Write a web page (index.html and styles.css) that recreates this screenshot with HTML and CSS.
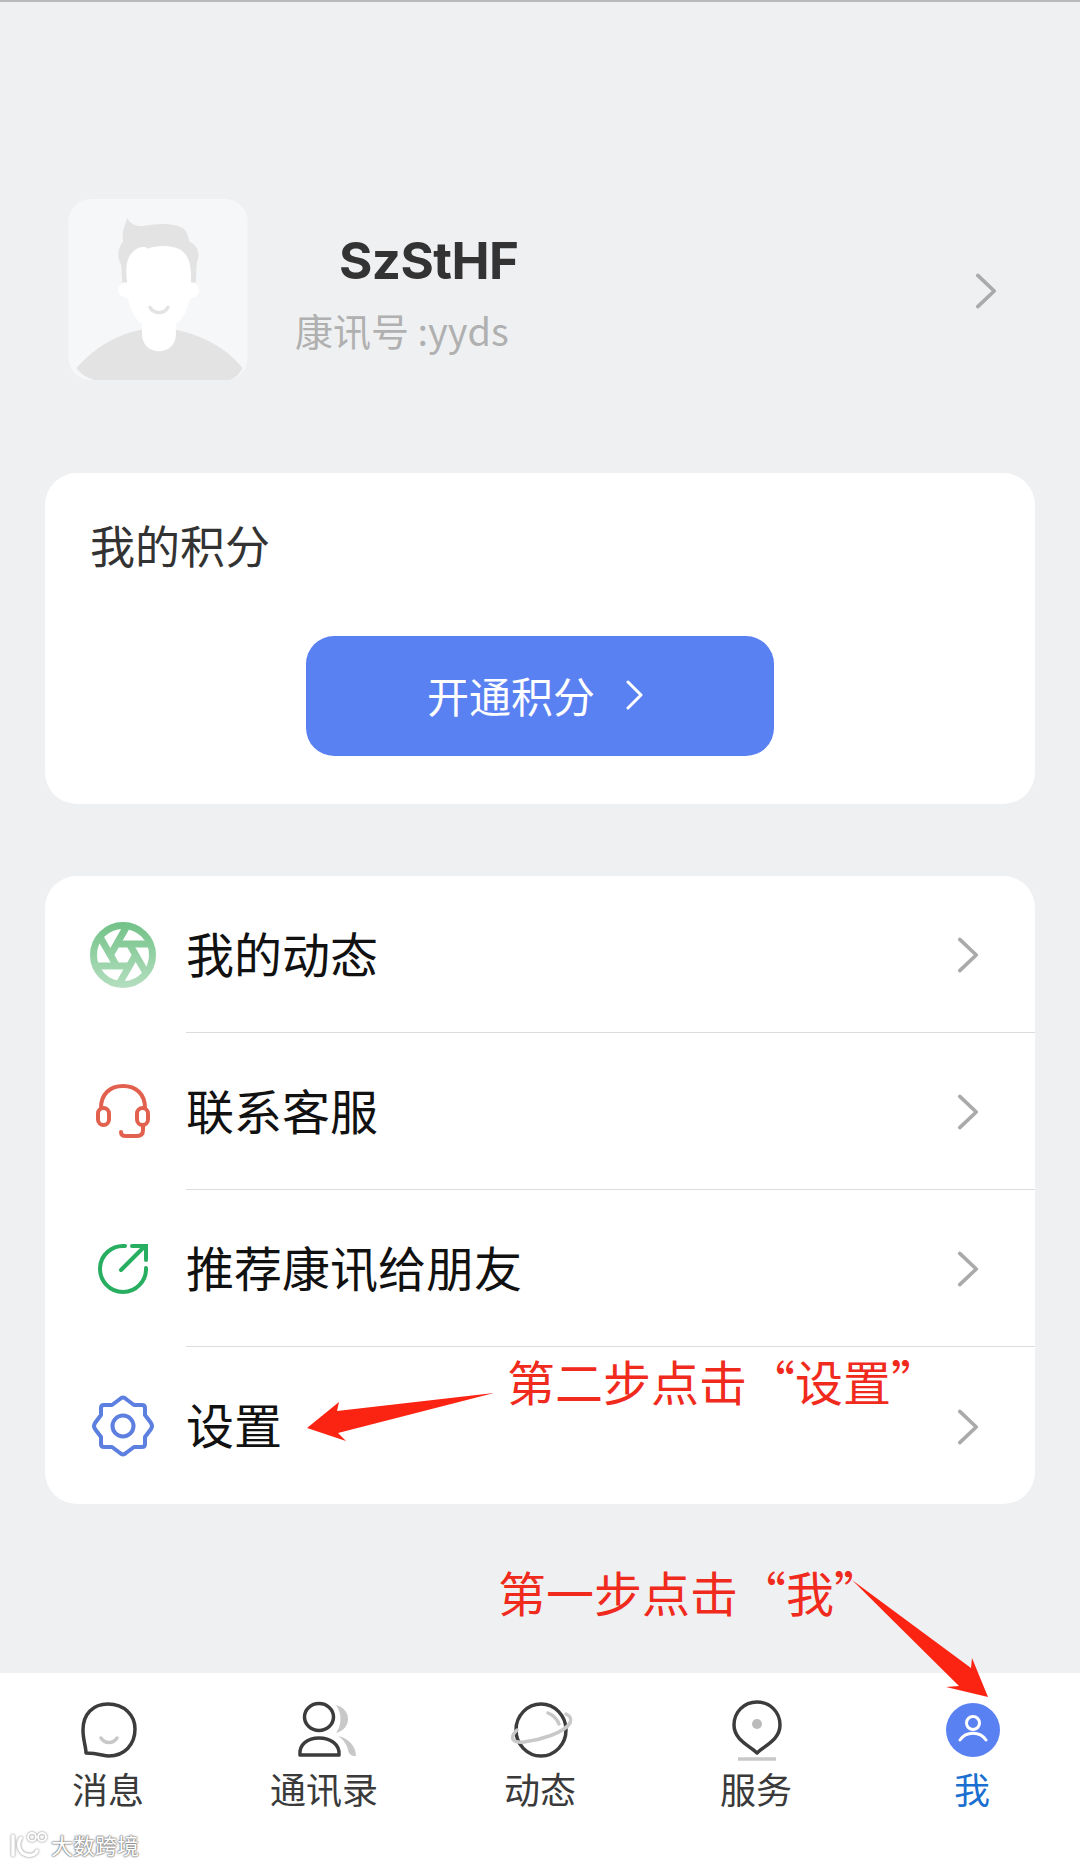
FILE: index.html
```html
<!DOCTYPE html>
<html lang="zh-CN">
<head>
  <meta charset="UTF-8" />
  <meta name="viewport" content="width=device-width, initial-scale=1.0" />
  <title>我</title>
  <link rel="stylesheet" href="styles.css">
</head>
<body>
  <div class="page">
    <main class="content">
      <section class="profile">
        <svg class="avatar" viewBox="0 0 180 182">
          <rect width="180" height="182" rx="22" fill="#f6f7f8"/>
          <path d="M8 170 C30 145 60 130 90 130 C120 130 155 145 175 170 C172 176 168 180 162 182 H26 C18 180 12 176 8 170 Z" fill="#e3e3e3"/>
          <path d="M59 19 C62 25 68 28 76 27 C90 24 108 24 116 30 C121 36 120 40 122 43 C130 47 133 55 129 64 L128 84 H54 L53 66 C48 58 50 48 55 43 C53 33 57 27 59 19 Z" fill="#e3e3e3"/>
          <path d="M59 84 C57 70 58 58 66 52 C72 47 78 48 80 50 C88 46 106 46 114 52 C122 58 124 70 123 84 C130 84 134 92 130 96 C128 99 124 100 122 100 C120 112 114 122 108 126 V136 C108 147 100 153 91 153 C82 153 74 147 74 136 V126 C68 122 62 112 60 100 C57 100 53 98 51 95 C48 90 52 84 59 84 Z" fill="#fff"/>
          <path d="M82 109 C86 116 96 116 100 109" fill="none" stroke="#e3e3e3" stroke-width="3.5" stroke-linecap="round"/>
        </svg>
        <div class="profile-text">
          <div class="name">SzStHF</div>
          <div class="account">康讯号 :yyds</div>
        </div>
        <svg class="chev chev-profile" viewBox="0 0 24 40"><path d="M3 3 L21 20 L3 37"/></svg>
      </section>

      <section class="card points">
        <h2 class="points-title">我的积分</h2>
        <button class="points-btn">
          <span class="btn-label">开通积分</span>
          <svg class="btn-chev" viewBox="0 0 18 30"><path d="M2 2 L15 15 L2 28"/></svg>
        </button>
      </section>

      <section class="card menu">
        <div class="row">
          <svg class="row-icon" viewBox="0 0 70 70">
            <defs>
              <linearGradient id="fade" x1="0" y1="0" x2="0" y2="1">
                <stop offset="0" stop-color="#fff" stop-opacity="0"/>
                <stop offset="1" stop-color="#fff" stop-opacity=".5"/>
              </linearGradient>
            </defs>
            <g fill="none" stroke="#6fc185" stroke-width="7">
              <circle cx="35" cy="35" r="29.5"/>
              <path d="M27 24 H62"/>
              <path d="M27 24 H62" transform="rotate(60 35 35)"/>
              <path d="M27 24 H62" transform="rotate(120 35 35)"/>
              <path d="M27 24 H62" transform="rotate(180 35 35)"/>
              <path d="M27 24 H62" transform="rotate(240 35 35)"/>
              <path d="M27 24 H62" transform="rotate(300 35 35)"/>
            </g>
            <rect width="70" height="70" fill="url(#fade)"/>
          </svg>
          <div class="row-body">
            <span class="row-label">我的动态</span>
            <svg class="chev" viewBox="0 0 24 40"><path d="M3 3 L21 20 L3 37"/></svg>
          </div>
        </div>
        <div class="row">
          <svg class="row-icon" viewBox="0 0 70 70" fill="none" stroke="#e2614e" stroke-width="4" stroke-linecap="round">
            <path d="M13 31 C13 17 22 9 35 9 C48 9 57 17 57 31"/>
            <rect x="10" y="31" width="11" height="17" rx="5.5"/>
            <rect x="49" y="31" width="11" height="17" rx="5.5"/>
            <path d="M55 48 V53 Q55 59 49 59 H38 Q33 59 33 55"/>
          </svg>
          <div class="row-body">
            <span class="row-label">联系客服</span>
            <svg class="chev" viewBox="0 0 24 40"><path d="M3 3 L21 20 L3 37"/></svg>
          </div>
        </div>
        <div class="row">
          <svg class="row-icon" viewBox="0 0 70 70" fill="none" stroke="#27ae60" stroke-width="4" stroke-linecap="round">
            <path d="M37 12 A23 23 0 1 0 58 34"/>
            <path d="M33 36 L57 12"/>
            <path d="M44 12 H58 V26"/>
          </svg>
          <div class="row-body">
            <span class="row-label">推荐康讯给朋友</span>
            <svg class="chev" viewBox="0 0 24 40"><path d="M3 3 L21 20 L3 37"/></svg>
          </div>
        </div>
        <div class="row">
          <svg class="row-icon" viewBox="0 0 70 70" fill="none" stroke="#5d7fe0" stroke-width="4" stroke-linejoin="round">
            <path d="M32 8 Q35 5 38 8 L46 14 H54 Q57 14 57 17 V24 L63 32 Q65 35 63 38 L57 46 V53 Q57 56 54 56 H46 L38 62 Q35 65 32 62 L24 56 H16 Q13 56 13 53 V46 L7 38 Q5 35 7 32 L13 24 V17 Q13 14 16 14 H24 Z"/>
            <circle cx="35" cy="35" r="10.5"/>
          </svg>
          <div class="row-body">
            <span class="row-label">设置</span>
            <svg class="chev" viewBox="0 0 24 40"><path d="M3 3 L21 20 L3 37"/></svg>
          </div>
        </div>
      </section>
    </main>

    <nav class="tabbar">
      <div class="tab">
        <svg class="tab-icon" viewBox="0 0 60 60" fill="none" stroke="#3c3c3c" stroke-width="3.5" stroke-linejoin="round">
          <path d="M8 53 C8 47 5 40 5 30 C5 14 15 4 30 4 C46 4 57 15 57 29 C57 45 46 56 31 56 C25 56 21 53 8 53 Z"/>
          <path class="tab-soft" d="M23 38 C27 44 35 44 39 38" stroke-linecap="round"/>
        </svg>
        <span class="tab-label">消息</span>
      </div>
      <div class="tab">
        <svg class="tab-icon" viewBox="0 0 60 60" fill="none" stroke="#3c3c3c" stroke-width="3.5">
          <ellipse cx="25" cy="17" rx="14.5" ry="13.5"/>
          <path d="M6 55 C5 44 14 38 25 38 C36 38 46 44 45 55 Z" stroke-linejoin="round"/>
          <path d="M42 5 C58 9 58 29 42 33 C48 25 48 13 42 5 Z" fill="#c8c8c8" stroke="none"/>
          <path d="M44 36 C54 38 62 46 62 56 C57 56 55 54 54 50 C53 45 50 40 44 36 Z" fill="#c8c8c8" stroke="none"/>
        </svg>
        <span class="tab-label">通讯录</span>
      </div>
      <div class="tab">
        <svg class="tab-icon" viewBox="0 0 60 60" fill="none" stroke="#3c3c3c" stroke-width="3.5" stroke-linecap="round">
          <ellipse cx="31" cy="30" rx="25" ry="26"/>
          <path class="tab-soft" d="M7 30 C-1 38 2 43 14 42 C30 40 54 33 60 23 C62 18 60 16 56 14"/>
          <path class="tab-soft" d="M38 13 C43 15 47 19 49 24"/>
        </svg>
        <span class="tab-label">动态</span>
      </div>
      <div class="tab">
        <svg class="tab-icon" viewBox="0 0 60 60" fill="none" stroke="#3c3c3c" stroke-width="3.5" stroke-linejoin="round">
          <path d="M31 53 C24 46 8 40 8 25 C8 12 18 2 31 2 C44 2 54 12 54 25 C54 40 38 46 31 53 Z"/>
          <circle cx="31" cy="24" r="5" fill="#bbb" stroke="none"/>
          <path class="tab-soft" d="M12 59 H50"/>
        </svg>
        <span class="tab-label">服务</span>
      </div>
      <div class="tab tab-active">
        <svg class="tab-icon" viewBox="0 0 60 60" fill="none" stroke="#fff" stroke-width="3" stroke-linecap="round">
          <circle cx="31" cy="30" r="27" fill="#5a81f2" stroke="none"/>
          <circle cx="31" cy="23" r="6.5"/>
          <path d="M18 40 C24 31 38 31 44 40"/>
        </svg>
        <span class="tab-label">我</span>
      </div>
    </nav>

    <div class="note note-settings">第二步点击“设置”</div>
    <div class="note note-me">第一步点击“我”</div>
    <svg class="arrows" viewBox="0 0 1080 1865">
      <path d="M494 1393 L337 1411 L339 1402 L307 1428 L346 1441 L338 1433 Z"/>
      <path d="M852 1580 L971 1668 L972 1658 L988 1697 L946 1687 L959 1686 Z"/>
    </svg>
    <div class="watermark">
      <svg class="watermark-logo" viewBox="0 0 40 28" fill="none" stroke="#fff" stroke-width="3.5" stroke-linecap="round">
        <path d="M4 6 V25"/>
        <path d="M12 8 C8 13 9 23 18 25 C23 26 27 24 28 21"/>
        <circle cx="23" cy="7" r="4" stroke-width="2"/>
        <circle cx="33" cy="7" r="4" stroke-width="2"/>
      </svg>
      <span>大数跨境</span>
    </div>
  </div>
</body>
</html>
```

FILE: styles.css
```css
* {
  box-sizing: border-box;
}

body {
  margin: 0;
  font-family: "Noto Sans CJK SC", "Noto Sans", sans-serif;
  background-color: #eff0f2;
}

.page {
  position: relative;
  display: flex;
  flex-direction: column;
  width: 1080px;
  height: 1865px;
  overflow: hidden;
  border-top: 2px solid #b9b9bd;
}

.content {
  flex: 1;
  padding-top: 197px;
}

.profile {
  display: flex;
  align-items: center;
  height: 181px;
  padding: 0 83px 0 68px;
}

.avatar {
  width: 180px;
  height: 181px;
  flex-shrink: 0;
}

.profile-text {
  flex: 1;
  margin-left: 47px;
  padding-top: 10px;
}

.name {
  margin-left: 44px;
  font-family: Inter, "Liberation Sans", sans-serif;
  font-size: 51px;
  font-weight: 700;
  letter-spacing: -0.6px;
  line-height: 60px;
  color: #333;
}

.account {
  margin-top: 11px;
  font-size: 38px;
  line-height: 56px;
  color: #b0b0b0;
}

.chev {
  width: 22px;
  height: 38px;
  flex-shrink: 0;
  margin-top: 2px;
  fill: none;
  stroke: #aaa;
  stroke-width: 4;
  stroke-linecap: round;
  stroke-linejoin: round;
}

.card {
  margin: 0 45px;
  background: #ffffff;
  border-radius: 32px;
}

.points {
  height: 331px;
  margin-top: 93px;
  padding: 37px 45px;
}

.points-title {
  margin: 0;
  font-size: 45px;
  font-weight: 400;
  line-height: 70px;
  color: #333;
}

.points-btn {
  display: flex;
  align-items: center;
  justify-content: center;
  gap: 31px;
  width: 468px;
  height: 120px;
  margin: 56px auto 0;
  padding-right: 15px;
  background-color: #5a81f2;
  border: none;
  border-radius: 28px;
  color: #fff;
  font-family: inherit;
  font-size: 42px;
}

.btn-label {
  margin-top: -4px;
}

.btn-chev {
  width: 18px;
  height: 30px;
  margin-top: -2px;
  fill: none;
  stroke: #fff;
  stroke-width: 3;
  stroke-linecap: round;
  stroke-linejoin: round;
}

.menu {
  margin-top: 72px;
}

.row {
  display: flex;
  align-items: center;
  height: 157px;
  padding-left: 43px;
}

.row-icon {
  width: 70px;
  height: 70px;
  flex-shrink: 0;
  margin-right: 28px;
}

.row-body {
  flex: 1;
  display: flex;
  align-items: center;
  justify-content: space-between;
  height: 100%;
  padding-right: 56px;
  border-bottom: 1px solid #dcdcdc;
  font-size: 48px;
  color: #111;
}

.row-label {
  margin-top: -5px;
}

.row:last-child .row-body {
  border-bottom: none;
}

.tabbar {
  display: grid;
  grid-template-columns: repeat(5, 1fr);
  height: 192px;
  padding-top: 27px;
  background: #ffffff;
}

.tab {
  display: flex;
  flex-direction: column;
  align-items: center;
  font-size: 36px;
  line-height: 60px;
  color: #3a3a3a;
}

.tab-label {
  margin-top: -2px;
}

.tab-icon {
  display: block;
  width: 60px;
  height: 60px;
  overflow: visible;
}

.tab-soft {
  stroke: #c8c8c8;
}

.tab-active {
  color: #1a6fd0;
}

/* red annotations drawn on top of the screenshot */
.note {
  position: absolute;
  font-size: 48px;
  line-height: 60px;
  white-space: nowrap;
  color: #f02a1c;
}

.note-settings {
  left: 507px;
  top: 1348px;
}

.note-me {
  left: 498px;
  top: 1559px;
}

.arrows {
  position: absolute;
  left: 0;
  top: -2px;
  width: 1080px;
  height: 1865px;
  fill: #fb2413;
  pointer-events: none;
}

.watermark {
  position: absolute;
  left: 9px;
  bottom: 6px;
  display: flex;
  align-items: center;
  gap: 2px;
  font-size: 22px;
  line-height: 30px;
  color: #fff;
  text-shadow: 0 0 2px #777, 0 0 2px #777, 0 0 1px #777;
}

.watermark-logo {
  width: 40px;
  height: 28px;
  filter: drop-shadow(0 0 1px #777);
}
```
